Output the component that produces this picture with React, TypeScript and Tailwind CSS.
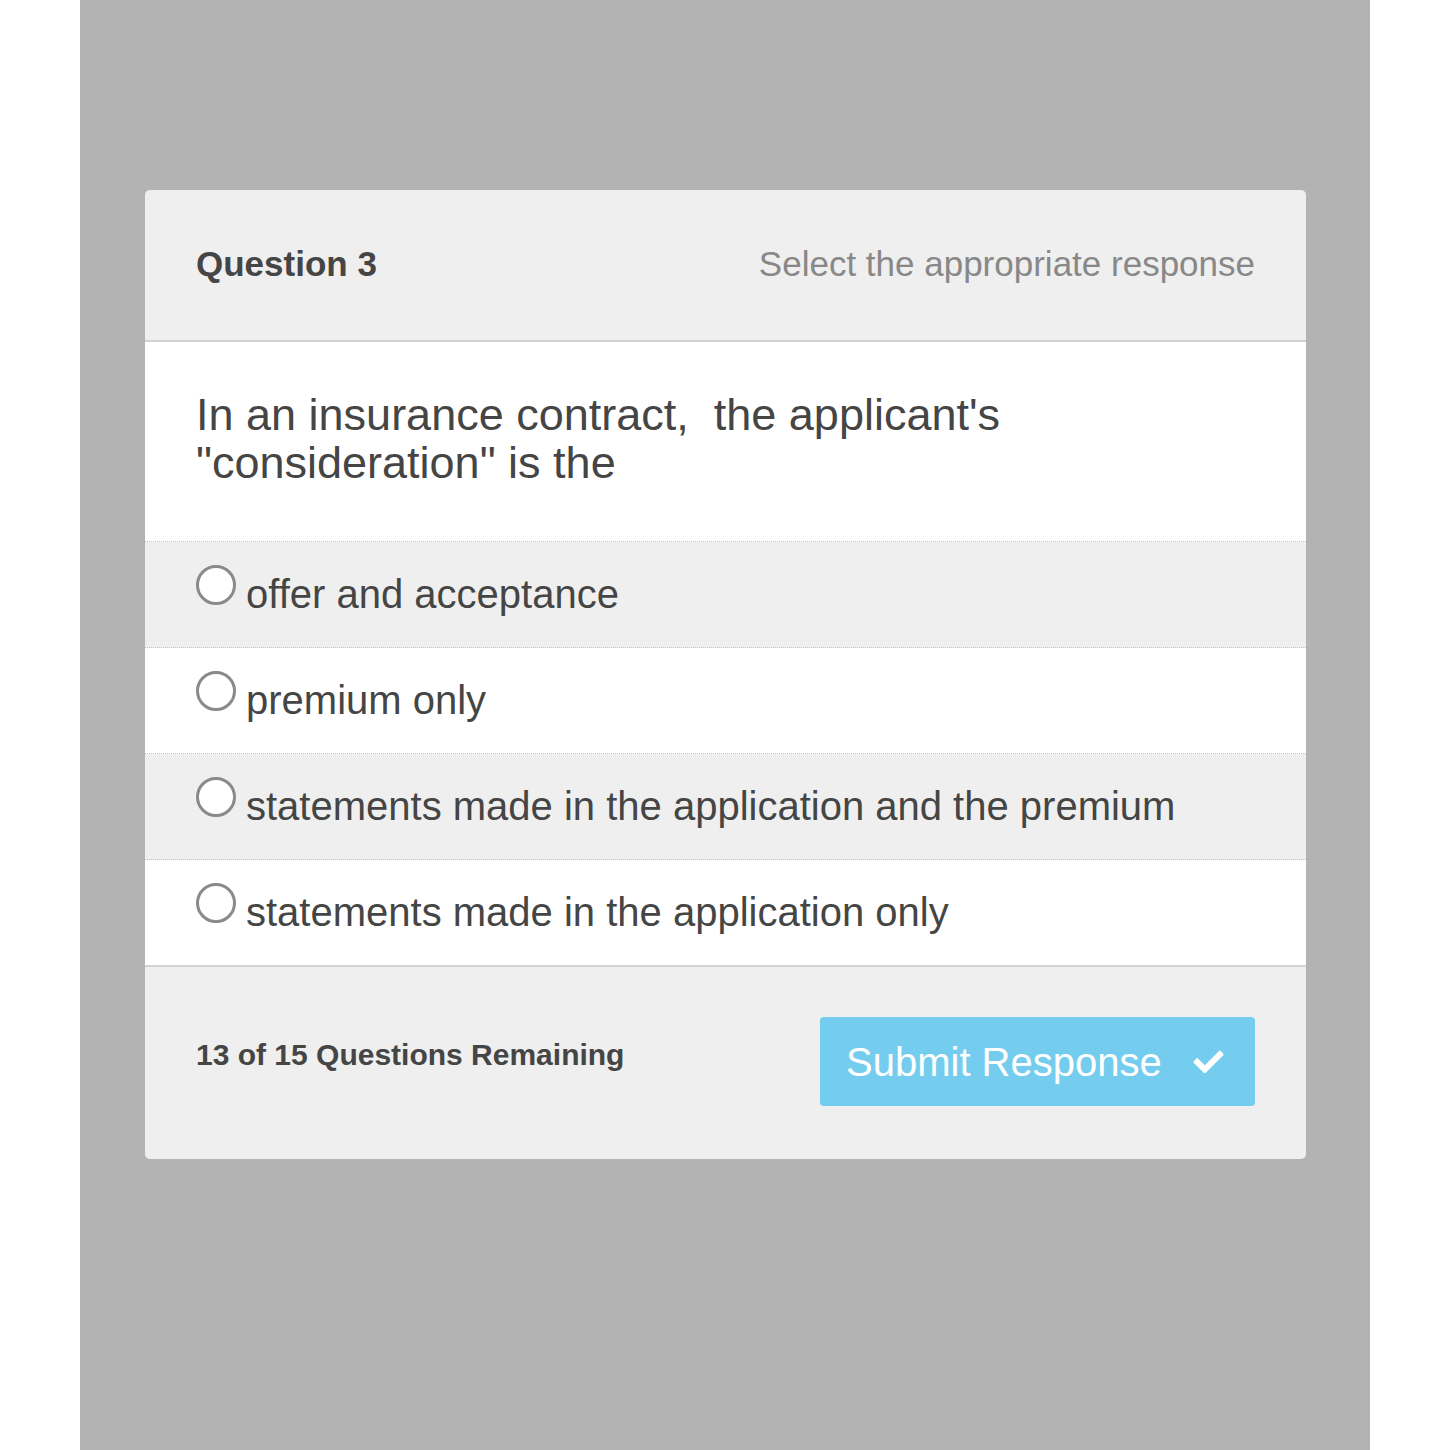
import { FaCheck } from 'react-icons/fa';

const OPTIONS = [
  'offer and acceptance',
  'premium only',
  'statements made in the application and the premium',
  'statements made in the application only',
];

export default function App() {
  return (
    <div className="flex min-h-[1450px] bg-white font-['Liberation_Sans',Arial,sans-serif]">
      <div className="ml-[80px] h-[1450px] w-[1290px] bg-[#b3b3b3] px-[65px] pt-[190px]">
        <div className="w-[1161px] overflow-hidden rounded-[5px] bg-[#efefef]">

          {/* Header */}
          <div className="flex h-[152px] items-center justify-between border-b-2 border-[#d2d2d2] px-[51px] pb-[2px]">
            <p className="text-[35px] font-bold text-[#454545]">Question 3</p>
            <p className="text-[35px] text-[#888888]">Select the appropriate response</p>
          </div>

          {/* Question */}
          <div className="border-b border-dotted border-[#c4c4c4] bg-white px-[51px] pb-[54px] pt-[49px]">
            <p className="text-[45px] leading-[48px] text-[#454545]">
              In an insurance contract,&nbsp; the applicant's
              <br />
              "consideration" is the
            </p>
          </div>

          {/* Options */}
          {OPTIONS.map((opt, i) => (
            <label
              key={opt}
              className={`flex items-start gap-[10px] px-[51px] pb-[29px] pt-[22px] ${
                i < OPTIONS.length - 1 ? 'border-b border-dotted border-[#c4c4c4]' : 'border-b-2 border-[#d2d2d2]'
              } ${i % 2 === 0 ? 'bg-[#efefef]' : 'bg-white'}`}
            >
              <span className="mt-[1px] h-[40px] w-[40px] shrink-0 rounded-full border-[3px] border-[#8a8a8a] bg-white" />
              <span className="mt-[6px] text-[40px] leading-[48px] text-[#454545]">{opt}</span>
            </label>
          ))}

          {/* Footer */}
          <div className="flex items-start justify-between px-[51px] pb-[53px] pt-[50px]">
            <p className="mt-[20px] text-[30px] font-bold leading-[36px] text-[#454545]">13 of 15 Questions Remaining</p>
            <button className="flex h-[89px] w-[435px] items-center gap-[28px] rounded-[4px] bg-[#74cdee] pl-[26px] text-[40px] text-white">
              Submit Response
              <FaCheck className="h-[30px] w-[37px]" />
            </button>
          </div>
        </div>
      </div>
    </div>
  );
}
